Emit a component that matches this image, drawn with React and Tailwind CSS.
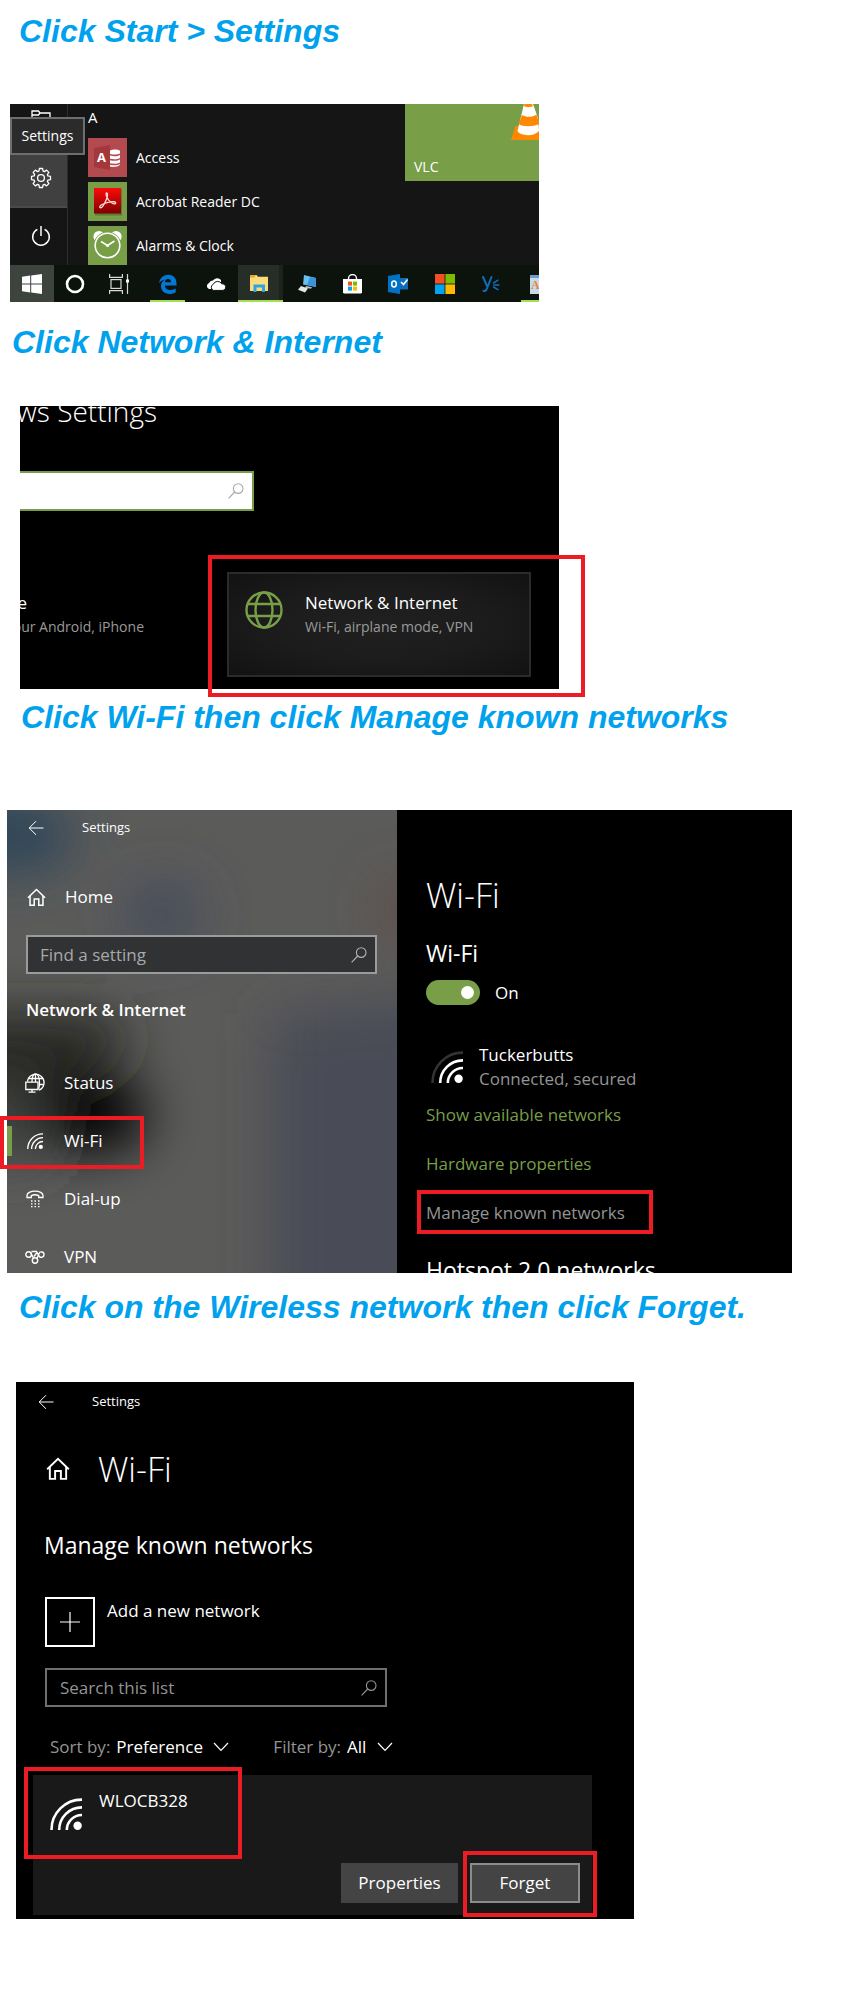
import React from "react";

const segoe = "font-['Open_Sans','Noto_Sans',sans-serif]";

function StepTitle({ children, className = "" }) {
  return (
    <h2
      className={`font-['Liberation_Sans',Arial,sans-serif] text-[32px] leading-10 font-bold italic text-[#00a2ed] ${className}`}
    >
      {children}
    </h2>
  );
}

function Highlight({ className }) {
  return (
    <span
      aria-hidden="true"
      className={`pointer-events-none absolute border-4 border-[#ed1c24] ${className}`}
    />
  );
}

/* ---------- shared icons ---------- */

function SearchIcon({ className }) {
  return (
    <svg viewBox="0 0 16 16" className={className} fill="none" stroke="currentColor" strokeWidth="1.1">
      <circle cx="10.2" cy="5.6" r="4.8" />
      <path d="M6.7 9 L0.6 15.3" />
    </svg>
  );
}

function BackIcon() {
  return (
    <svg viewBox="0 0 16 16" className="size-4" fill="none" stroke="currentColor" strokeWidth="1">
      <path d="M15.5 8H1M8 1.2L1.2 8L8 14.8" />
    </svg>
  );
}

function HomeIcon({ className }) {
  return (
    <svg viewBox="0 0 20 20" className={className} fill="none" stroke="currentColor" strokeWidth="1.6">
      <path d="M1 10.2L10 1.6L19 10.2" />
      <path d="M3.2 8.4V18.2H7.6V11.6H12.4V18.2H16.8V8.4" />
    </svg>
  );
}

function WifiIcon({ className, weak = false }) {
  return (
    <svg viewBox="0 0 32 32" className={className} fill="none" stroke="currentColor" strokeWidth="2.6">
      <path d="M1.5 32A30.2 30.2 0 0 1 32 1.6" stroke={weak ? "#333333" : "currentColor"} />
      <path d="M9.2 32A22.6 22.6 0 0 1 32 9.4" />
      <path d="M16.8 32A15 15 0 0 1 32 17" />
      <circle cx="27.6" cy="27.8" r="4.2" fill="currentColor" stroke="none" />
    </svg>
  );
}

function ChevronIcon() {
  return (
    <svg viewBox="0 0 16 10" className="h-[10px] w-4" fill="none" stroke="currentColor" strokeWidth="1.2">
      <path d="M1 1L8 8.4L15 1" />
    </svg>
  );
}

/* ---------- step 1: start menu ---------- */

function FolderIcon() {
  return (
    <svg viewBox="0 0 20 16" className="h-4 w-5" fill="none" stroke="#fff" strokeWidth="1.3">
      <path d="M1 15V1H7.5L9 3H19V15" />
      <path d="M1 5H7.5L9 3" />
    </svg>
  );
}

function GearIcon() {
  return (
    <svg viewBox="0 0 22 22" className="size-[22px]" fill="none" stroke="#fff" strokeWidth="1.3" strokeLinejoin="round">
      <path d="M9.4 1.5h3.2l.5 2.6 1.3.55 2.2-1.5 2.25 2.25-1.5 2.2.55 1.3 2.6.5v3.2l-2.6.5-.55 1.3 1.5 2.2-2.25 2.25-2.2-1.5-1.3.55-.5 2.6H9.4l-.5-2.6-1.3-.55-2.2 1.5-2.25-2.25 1.5-2.2-.55-1.3-2.6-.5V9.4l2.6-.5.55-1.3-1.5-2.2L5.4 3.15l2.2 1.5 1.3-.55z" />
      <circle cx="11" cy="11" r="3.4" />
    </svg>
  );
}

function PowerIcon() {
  return (
    <svg viewBox="0 0 20 22" className="h-[22px] w-5" fill="none" stroke="#fff" strokeWidth="1.5">
      <path d="M10 1V11" />
      <path d="M6.4 4.4A8.3 8.3 0 1 0 13.6 4.4" />
    </svg>
  );
}

function AccessIcon() {
  return (
    <svg viewBox="0 0 39 39" className="size-[39px] shrink-0">
      <rect width="39" height="39" fill="#b24a50" />
      <path d="M6 10L22 7V32L6 29Z" fill="#a4373a" />
      <text x="9" y="24" fontSize="13" fontWeight="700" fill="#fff" fontFamily="Open Sans">A</text>
      <g fill="#fff">
        <path d="M22 12.5C25 11 30 11.2 32 12.8V15.5C29.5 17 25 16.8 22 16Z" />
        <path d="M22 17.5C25 18.5 30 18.3 32 16.9V20C29.5 21.6 25 21.5 22 20.8Z" />
        <path d="M22 22.2C25 23.2 30 23 32 21.4V24.5C29.5 26 25 26 22 25.3Z" />
        <path d="M22 26.7C25 27.6 30 27.4 32 26C32 28.5 25 29.5 22 28.5Z" />
      </g>
    </svg>
  );
}

function AcrobatIcon() {
  return (
    <svg viewBox="0 0 39 39" className="size-[39px] shrink-0">
      <defs>
        <linearGradient id="acrobat" x1="0" y1="0" x2="0" y2="1">
          <stop offset="0" stopColor="#ff0a0a" />
          <stop offset="1" stopColor="#7d0000" />
        </linearGradient>
      </defs>
      <rect width="39" height="39" fill="#789e48" />
      <rect x="7" y="7.5" width="27" height="26" fill="#4b632d" opacity=".6" />
      <rect x="6" y="6" width="27" height="25.5" fill="url(#acrobat)" />
      <path
        d="M12 25.5C10.5 24 15 21.5 20 20.3C25 19.2 28.5 19.5 27.5 21.5C26 23 20.5 19.5 18.8 15C17.6 12 18 10.5 19 11C20.5 12 18.5 17.5 16.5 21.5C15 24.5 13 26.5 12 25.5Z"
        fill="none"
        stroke="#ffd9d9"
        strokeWidth="1.3"
      />
    </svg>
  );
}

function AlarmIcon() {
  return (
    <svg viewBox="0 0 39 39" className="size-[39px] shrink-0">
      <rect width="39" height="39" fill="#789e48" />
      <circle cx="11" cy="10.5" r="5.6" fill="#fff" />
      <circle cx="28" cy="10.5" r="5.6" fill="#fff" />
      <circle cx="19.5" cy="19.5" r="13.8" fill="#789e48" />
      <circle cx="19.5" cy="19.5" r="12.3" fill="none" stroke="#fff" strokeWidth="1.6" />
      <path d="M13 15.5L19.5 19.5L26.5 15" fill="none" stroke="#fff" strokeWidth="1.5" />
      <circle cx="19.5" cy="19.5" r="1.6" fill="#fff" />
    </svg>
  );
}

function VlcCone() {
  return (
    <svg viewBox="0 0 28 36" className="h-9 w-7">
      <path d="M4.5 22H28V36H0Z" fill="#ff8800" />
      <path d="M13 0H22L27 14L28 27C23 33 9 32 6.5 27Z" fill="#fff" />
      <path d="M13.5 0H21L22 2C20 3.5 15 3.5 12.8 2Z" fill="#ff8800" />
      <path d="M11 11C15 13.5 22 13.5 25.5 10.5L28 18V20C22 23 12 23 7.5 20Z" fill="#ff8800" />
    </svg>
  );
}

const apps = [
  { name: "Access", Icon: AccessIcon },
  { name: "Acrobat Reader DC", Icon: AcrobatIcon },
  { name: "Alarms & Clock", Icon: AlarmIcon },
];

function WindowsLogo() {
  return (
    <svg viewBox="0 0 20 20" className="size-5" fill="#fff">
      <path d="M0 2.7L8.2 1.6V9.5H0ZM9.2 1.4L20 0V9.5H9.2ZM0 10.5H8.2V18.4L0 17.3ZM9.2 10.5H20V20L9.2 18.6Z" />
    </svg>
  );
}

function CortanaIcon() {
  return (
    <svg viewBox="0 0 20 20" className="size-5" fill="none" stroke="#fff" strokeWidth="2.6">
      <circle cx="10" cy="10" r="8" />
    </svg>
  );
}

function TaskViewIcon() {
  return (
    <svg viewBox="0 0 20 20" className="size-5" fill="none" stroke="#d8d8d8" strokeWidth="1.2">
      <path d="M.6 0V3.4H13.4V0M.6 20V16.6H13.4V20" />
      <rect x="2" y="5.6" width="10" height="8.8" />
      <path d="M18.5 0V20" />
      <path d="M18.5 5.5V8.5" stroke="#fff" strokeWidth="3" />
    </svg>
  );
}

function EdgeIcon() {
  return (
    <svg viewBox="0 0 18 20" className="h-5 w-[18px]" fill="#0078d7">
      <path d="M0 9.2C1 3.5 5 .8 9.5 .8C14.5 .8 17.5 4.5 17.5 9.5V11.4H5.8C6 14.5 8.500 16 11.5 16C13.6 16 15.2 15.4 16.7 14.6V18.4C15 19.3 12.8 19.9 10.5 19.9C5.5 19.9 2 17 2 12C2 9.5 3.5 7 6.2 5.6C3.5 5.8 1.5 7.3 0 9.2ZM5.9 8.2H12C12 6 10.8 5 9 5C7.3 5 6.2 6.2 5.9 8.2Z" />
    </svg>
  );
}

function OneDriveIcon() {
  return (
    <svg viewBox="0 0 20 14" className="h-[14px] w-5">
      <path d="M3 12A3.2 3.2 0 0 1 3 6A4 4 0 0 1 7 3.5A5 5 0 0 1 15 3V12Z" fill="#fff" />
      <path d="M7.5 13.4A3.2 3.2 0 0 1 7.2 7.4A4.8 4.8 0 0 1 15.8 6.8A3.3 3.3 0 0 1 17 13.4Z" fill="#fff" stroke="#0c130d" strokeWidth="1" />
    </svg>
  );
}

function ExplorerIcon() {
  return (
    <svg viewBox="0 0 18 17" className="h-[17px] w-[18px]">
      <path d="M0 0H6.5L8 1.8H18V16H0Z" fill="#fbdc7c" />
      <path d="M0 0H6L4.5 2.5H0Z" fill="#e8a92c" />
      <path d="M3.5 17V9.5H15V17H12V12.5H6.5V17Z" fill="#2ea3e3" />
    </svg>
  );
}

function ComputerIcon() {
  return (
    <svg viewBox="0 0 18 18" className="size-[18px]">
      <path d="M6 0L18 3V12L5 9.5Z" fill="#69bff0" />
      <path d="M12 2L18 3V12L9 10Z" fill="#3b94d8" />
      <path d="M8 11L14 12.2L13 13.8L7 12.8Z" fill="#b9c2c8" />
      <path d="M3 11L10 13.5L7 17.5L0 14.8Z" fill="#e3e6e8" />
    </svg>
  );
}

function StoreIcon() {
  return (
    <svg viewBox="0 0 19 20" className="h-5 w-[19px]">
      <path d="M5.5 6V4.5A4 4 0 0 1 13.5 4.5V6" fill="none" stroke="#fff" strokeWidth="1.4" />
      <path d="M0 5H19V18.5L18 19.5H1L0 18.5Z" fill="#fff" />
      <rect x="5" y="7.6" width="4" height="4" fill="#f25022" />
      <rect x="10" y="7.6" width="4" height="4" fill="#7fba00" />
      <rect x="5" y="12.6" width="4" height="4" fill="#00a4ef" />
      <rect x="10" y="12.6" width="4" height="4" fill="#ffb900" />
    </svg>
  );
}

function OutlookIcon() {
  return (
    <svg viewBox="0 0 20 20" className="size-5">
      <rect x="11" y="4" width="9" height="11.5" fill="#0f6cbd" />
      <path d="M13 8L15.5 10.5L19.5 5.5" fill="none" stroke="#fff" strokeWidth="1.6" />
      <path d="M0 2L12 0V20L0 18Z" fill="#0072c6" />
      <ellipse cx="6" cy="10" rx="2.3" ry="3" fill="none" stroke="#fff" strokeWidth="1.6" />
    </svg>
  );
}

function MicrosoftIcon() {
  return (
    <svg viewBox="0 0 20 20" className="size-5">
      <rect width="9.6" height="9.6" fill="#f25022" />
      <rect x="10.4" width="9.6" height="9.6" fill="#7fba00" />
      <rect y="10.4" width="9.6" height="9.6" fill="#00a4ef" />
      <rect x="10.4" y="10.4" width="9.6" height="9.6" fill="#ffb900" />
    </svg>
  );
}

function YammerIcon() {
  return (
    <svg viewBox="0 0 18 18" className="size-[18px]" fill="none" stroke="#0f6cbd" strokeWidth="2" strokeLinecap="round">
      <path d="M1 2L5.2 11.5M9.5 2L4.8 13.8C4.2 15.5 3.3 16 1.5 16" />
      <path d="M11.5 8L16 5.2M11.8 10H17M11.5 12L16 14.6" strokeWidth="1.5" />
    </svg>
  );
}

function WordPadIcon() {
  return (
    <svg viewBox="0 0 9 20" className="h-5 w-[9px]">
      <path d="M0 1H9V20H0Z" fill="#c7d9ea" />
      <path d="M0 1H9V4H0Z" fill="#6f9cc8" />
      <text x="1" y="15" fontSize="12" fontWeight="700" fill="#ee8434" fontFamily="Liberation Serif">A</text>
    </svg>
  );
}

const taskbar = [
  { label: "Start", Icon: WindowsLogo, cell: "w-11 bg-[#3d433d]" },
  { label: "Cortana", Icon: CortanaIcon, cell: "w-[42px]" },
  { label: "Task View", Icon: TaskViewIcon, cell: "w-[46px]" },
  { label: "Edge", Icon: EdgeIcon, cell: "w-[51px]", bar: "left-2 w-[35px]" },
  { label: "OneDrive", Icon: OneDriveIcon, cell: "w-[45px]" },
  { label: "File Explorer", Icon: ExplorerIcon, cell: "w-[45px] border-r-4 border-[#1c231c] bg-[#272e27]", bar: "left-0 w-[45px]" },
  { label: "Remote desktop", Icon: ComputerIcon, cell: "w-12" },
  { label: "Store", Icon: StoreIcon, cell: "w-[42px]" },
  { label: "Outlook", Icon: OutlookIcon, cell: "w-[50px]" },
  { label: "Microsoft", Icon: MicrosoftIcon, cell: "w-11" },
  { label: "Yammer", Icon: YammerIcon, cell: "w-12" },
];

function StartMenu() {
  return (
    <div className={`ml-[10px] w-full max-w-[529px] overflow-hidden bg-[#151515] text-[15px] text-white ${segoe}`}>
      <div className="flex h-[161px]">
        <div className="relative flex w-[58px] shrink-0 flex-col border-r border-[#2c2c2c]">
          <div className="flex h-[50px] justify-center pt-[6px] pl-1">
            <FolderIcon />
          </div>
          <button type="button" aria-label="Settings" className="flex h-[54px] items-center justify-center border-b-2 border-[#4a4a4a] bg-[#404040] pb-1 pl-1">
            <GearIcon />
          </button>
          <button type="button" aria-label="Power" className="flex flex-1 items-center justify-center pb-[2px] pl-1">
            <PowerIcon />
          </button>
          <span
            role="tooltip"
            className="absolute top-[13px] left-0 z-10 flex h-[38px] w-[75px] items-center justify-center border-2 border-[#6e6e6e] bg-[#2b2b2b] text-sm"
          >
            Settings
          </span>
        </div>
        <div className="flex-1 pl-5">
          <p className="mb-2 h-[26px] leading-[26px]">A</p>
          <ul className="flex flex-col gap-[5px]">
            {apps.map(({ name, Icon }) => (
              <li key={name} className="flex items-center gap-[9px] text-sm">
                <Icon />
                {name}
              </li>
            ))}
          </ul>
        </div>
        <div className="flex h-[77px] w-[134px] shrink-0 flex-col justify-between bg-[#789e48]">
          <div className="flex justify-end">
            <VlcCone />
          </div>
          <p className="pb-1 pl-[9px] text-sm leading-5">VLC</p>
        </div>
      </div>
      <div className="flex h-[37px] overflow-hidden bg-[#0c130d]">
        {taskbar.map(({ label, Icon, cell, bar }) => (
          <button key={label} type="button" aria-label={label} className={`relative flex shrink-0 items-center justify-center ${cell}`}>
            <Icon />
            {bar && <span className={`absolute bottom-0 h-[2px] bg-[#a5dd55] ${bar}`} />}
          </button>
        ))}
        <button type="button" aria-label="WordPad" className="relative ml-auto flex w-[18px] shrink-0 items-center justify-end">
          <WordPadIcon />
          <span className="absolute bottom-0 left-0 h-[2px] w-full bg-[#a5dd55]" />
        </button>
      </div>
    </div>
  );
}

/* ---------- step 2: Windows Settings ---------- */

function GlobeIcon() {
  return (
    <svg viewBox="0 0 38 38" className="size-[38px] shrink-0" fill="none" stroke="#789e48" strokeWidth="2.4">
      <circle cx="19" cy="19" r="17.5" />
      <ellipse cx="19" cy="19" rx="8.5" ry="17.5" />
      <path d="M2.5 13H35.5M2.5 25H35.5" />
    </svg>
  );
}

function WindowsSettings() {
  return (
    <div className={`relative ml-5 w-full max-w-[539px] ${segoe}`}>
      <div className="flex h-[283px] flex-col overflow-hidden bg-black text-white">
        <p className="-mt-[15px] flex w-[137px] justify-end text-[28px] leading-10 font-light whitespace-nowrap">ows Settings</p>
        <div className="mt-10 flex h-10 w-[234px] items-center border-2 border-l-0 border-[#789e48] bg-white pr-2">
          <input type="text" aria-label="Find a setting" className="min-w-0 flex-1 bg-transparent text-black outline-none" />
          <SearchIcon className="size-4 text-[#a8a8a8]" />
        </div>
        <div className="mt-[61px] flex justify-start">
          <div className="w-[207px] shrink-0 pt-[19px]">
            <p className="flex w-[7px] justify-end text-[17px] leading-6">e</p>
            <p className="flex w-[124px] justify-end text-sm leading-6 whitespace-nowrap text-[#9a9a9a]">our Android, iPhone</p>
          </div>
          <a
            href="#network"
            className="flex h-[105px] w-[304px] items-start gap-[22px] border-2 border-[#2b2b2b] bg-[radial-gradient(ellipse_at_center,#202020_0%,#1c1c1c_50%,#121212_100%)] px-4 pt-[17px]"
          >
            <GlobeIcon />
            <span className="flex flex-col">
              <span className="text-[17px] leading-6">Network &amp; Internet</span>
              <span className="text-sm leading-6 text-[#9a9a9a]">Wi-Fi, airplane mode, VPN</span>
            </span>
          </a>
        </div>
      </div>
      <Highlight className="top-[149px] left-[188px] h-[142px] w-[377px]" />
    </div>
  );
}

/* ---------- step 3: Network & Internet ---------- */

function StatusIcon() {
  return (
    <svg viewBox="0 0 20 20" className="size-5" fill="none" stroke="#fff" strokeWidth="1.3">
      <path d="M2.5 8.5A8.3 8.3 0 1 1 14 17.2" />
      <path d="M7 9C7 4 8.5 1 10.5 1C13 1 14.5 5 14.5 9.5C14.5 12.5 14.2 14.5 13.7 16M10.5 1V9M3.5 5.5H18M14 11.5H18.5" />
      <path d="M.8 9.2H13V16.5H.8ZM7 16.5V19M3.5 19.2H10.5" />
    </svg>
  );
}

function DialIcon() {
  return (
    <svg viewBox="0 0 18 18" className="size-[18px]" fill="none" stroke="#fff" strokeWidth="1.3">
      <path d="M1 7.5V5.5C1 3 4.5 1.2 9 1.2S17 3 17 5.5V7.5H12.7V5.6C10.5 4.6 7.5 4.6 5.3 5.6V7.5Z" />
      <path d="M5 11H13.5M5 13.8H13.5M5 16.6H13.5" strokeDasharray="1.5 2" />
    </svg>
  );
}

function VpnIcon() {
  return (
    <svg viewBox="0 0 20 14" className="h-[14px] w-5" fill="none" stroke="#fff" strokeWidth="1.4">
      <circle cx="3.6" cy="4.5" r="2.8" />
      <circle cx="10" cy="10.5" r="2.7" />
      <path d="M5.5 2.5L8.5 8M6.5 1.5H12M12 8.5L14 3.5C15 1 19 1.5 19 4.5C19 7.5 15.5 8 14.5 6.5L12 2.5L9 6.5" />
    </svg>
  );
}

function AcrylicBackdrop() {
  return (
    <svg
      aria-hidden="true"
      viewBox="0 0 390 463"
      preserveAspectRatio="none"
      className="absolute inset-0 -z-10 h-full w-full"
    >
      <defs>
        <filter id="haze" x="-100%" y="-100%" width="300%" height="300%">
          <feGaussianBlur stdDeviation="26" />
        </filter>
      </defs>
      <rect width="390" height="463" fill="#5b5b5a" />
      <g filter="url(#haze)">
        <path d="M-80 -10H40L70 30L40 60H-80Z" fill="#2c4559" />
        <ellipse cx="155" cy="105" rx="38" ry="34" fill="#454c5c" />
        <ellipse cx="396" cy="100" rx="22" ry="34" fill="#5e4b45" />
        <path d="M265 205L500 180V560H265Z" fill="#494c57" />
        <path d="M-80 205H105L125 235L60 275H-80Z" fill="#252622" />
        <path d="M-80 275H40V350H-80Z" fill="#3f4241" />
        <ellipse cx="85" cy="305" rx="56" ry="38" fill="#050505" />
      </g>
    </svg>
  );
}

const navItems = [
  { label: "Status", icon: <StatusIcon /> },
  { label: "Wi-Fi", icon: <WifiIcon className="size-4" />, active: true },
  { label: "Dial-up", icon: <DialIcon /> },
  { label: "VPN", icon: <VpnIcon /> },
];

function NetworkSettings() {
  return (
    <div className={`ml-[7px] flex h-[463px] w-full max-w-[785px] bg-black text-[17px] text-white ${segoe}`}>
      <div className="relative isolate w-[390px] shrink-0">
        <AcrylicBackdrop />
        <div className="flex h-9 items-center gap-[38px] pl-[21px] text-[13px]">
          <BackIcon />
          <span>Settings</span>
        </div>
        <a href="#home" className="mt-[22px] flex h-[58px] items-center gap-[19px] pl-5">
          <HomeIcon className="size-[19px]" />
          Home
        </a>
        <div className="mr-5 ml-[19px] mt-[9px] flex h-[39px] items-center border-2 border-[#9b9b9b] bg-[#303234] pr-2 pl-3">
          <input
            type="text"
            aria-label="Find a setting"
            placeholder="Find a setting"
            className="min-w-0 flex-1 bg-transparent outline-none placeholder:text-[#a9a9a9]"
          />
          <SearchIcon className="size-4 text-[#b4b4b4]" />
        </div>
        <h3 className="mt-6 pl-[19px] leading-6 font-semibold">Network &amp; Internet</h3>
        <nav className="mt-8 flex flex-col">
          {navItems.map(({ label, icon, active }) => (
            <a key={label} href="#nav" className="relative flex h-[58px] items-center gap-[18px] pl-[17px]">
              {active && <span className="absolute top-[14px] left-0 h-[30px] w-[5px] bg-[#789e48]" />}
              <span className="flex w-[22px] justify-center">{icon}</span>
              {label}
              {active && <Highlight className="top-1 -left-[7px] h-[53px] w-36" />}
            </a>
          ))}
        </nav>
      </div>
      <div className="min-w-0 flex-1 overflow-hidden pt-[65px] pl-[29px]">
        <h3 className="text-[34px] leading-10 font-light">Wi-Fi</h3>
        <p className="mt-[22px] text-[23px] leading-8">Wi-Fi</p>
        <label className="mt-[11px] flex h-[25px] items-center gap-[15px]">
          <input
            type="checkbox"
            role="switch"
            defaultChecked
            className="flex h-[25px] w-[54px] appearance-none items-center justify-end rounded-full bg-[#789e48] px-[6px] before:size-[13px] before:rounded-full before:bg-white"
          />
          On
        </label>
        <div className="mt-[38px] flex gap-4 pl-[5px] leading-6">
          <WifiIcon weak className="mt-2 size-8" />
          <div>
            <p>Tuckerbutts</p>
            <p className="text-[#949494]">Connected, secured</p>
          </div>
        </div>
        <div className="mt-3 flex flex-col items-start gap-[25px] leading-6">
          <a href="#available" className="text-[#789e48]">Show available networks</a>
          <a href="#hardware" className="text-[#789e48]">Hardware properties</a>
          <a href="#known" className="relative text-[#949494]">
            Manage known networks
            <Highlight className="-top-[11px] -left-[9px] h-[44px] w-[236px]" />
          </a>
        </div>
        <p className="mt-[29px] text-[23px] leading-8 whitespace-nowrap">Hotspot 2.0 networks</p>
      </div>
    </div>
  );
}

/* ---------- step 4: Manage known networks ---------- */

function KnownNetworks() {
  return (
    <div className={`ml-4 h-[537px] w-full max-w-[618px] bg-black text-[17px] text-white ${segoe}`}>
      <div className="flex h-10 items-center gap-[38px] pl-[22px] text-[13px]">
        <BackIcon />
        <span>Settings</span>
      </div>
      <div className="mt-[27px] flex items-center gap-7 pl-[30px]">
        <HomeIcon className="size-6" />
        <h3 className="text-[34px] leading-10 font-light">Wi-Fi</h3>
      </div>
      <p className="mt-10 pl-7 text-[23px] leading-8">Manage known networks</p>
      <button type="button" className="mt-9 ml-[29px] flex items-start gap-3 leading-7">
        <span className="flex size-[50px] items-center justify-center border-2 border-white">
          <svg viewBox="0 0 20 20" className="size-5" stroke="#fff" strokeWidth="1.2">
            <path d="M10 0V20M0 10H20" />
          </svg>
        </span>
        Add a new network
      </button>
      <div className="mt-[21px] ml-[29px] flex h-[39px] w-[342px] items-center border-2 border-[#6f6f6f] pr-2 pl-[13px]">
        <input
          type="text"
          aria-label="Search this list"
          placeholder="Search this list"
          className="min-w-0 flex-1 bg-transparent outline-none placeholder:text-[#949494]"
        />
        <SearchIcon className="size-4 text-[#949494]" />
      </div>
      <div className="mt-7 flex h-6 items-center gap-11 pl-[34px]">
        <div className="flex items-center">
          <label htmlFor="sort" className="pr-[6px] text-[#949494]">Sort by:</label>
          <select id="sort" className="appearance-none bg-black pr-[10px]">
            <option>Preference</option>
          </select>
          <ChevronIcon />
        </div>
        <div className="flex items-center">
          <label htmlFor="filter" className="pr-[6px] text-[#949494]">Filter by:</label>
          <select id="filter" className="appearance-none bg-black pr-[10px]">
            <option>All</option>
          </select>
          <ChevronIcon />
        </div>
      </div>
      <div className="relative mt-4 mr-[42px] ml-[17px] flex h-[140px] flex-col justify-between bg-[#191919] p-3 pl-[17px]">
        <div className="flex gap-[17px]">
          <WifiIcon className="mt-[11px] size-8" />
          <p className="leading-7">WLOCB328</p>
        </div>
        <div className="flex justify-end gap-3">
          <button type="button" className="h-10 w-[117px] bg-[#444444]">Properties</button>
          <button type="button" className="relative h-10 w-[110px] border-2 border-[#8c8c8c] bg-[#444444]">
            Forget
            <Highlight className="-top-[14px] -left-[9px] h-[66px] w-[134px]" />
          </button>
        </div>
        <Highlight className="-top-2 -left-[9px] h-[92px] w-[218px]" />
      </div>
    </div>
  );
}

export default function App() {
  return (
    <main className="min-h-screen overflow-x-hidden bg-white pt-[11px] pb-20">
      <StepTitle className="pl-[19px]">Click Start &gt; Settings</StepTitle>
      <div className="mt-[53px]">
        <StartMenu />
      </div>
      <StepTitle className="mt-5 pl-3">Click Network &amp; Internet</StepTitle>
      <div className="mt-11">
        <WindowsSettings />
      </div>
      <StepTitle className="mt-2 pl-[21px]">Click Wi-Fi then click Manage known networks</StepTitle>
      <div className="mt-[73px]">
        <NetworkSettings />
      </div>
      <StepTitle className="mt-[14px] pl-[19px]">Click on the Wireless network then click Forget.</StepTitle>
      <div className="mt-[55px]">
        <KnownNetworks />
      </div>
    </main>
  );
}
